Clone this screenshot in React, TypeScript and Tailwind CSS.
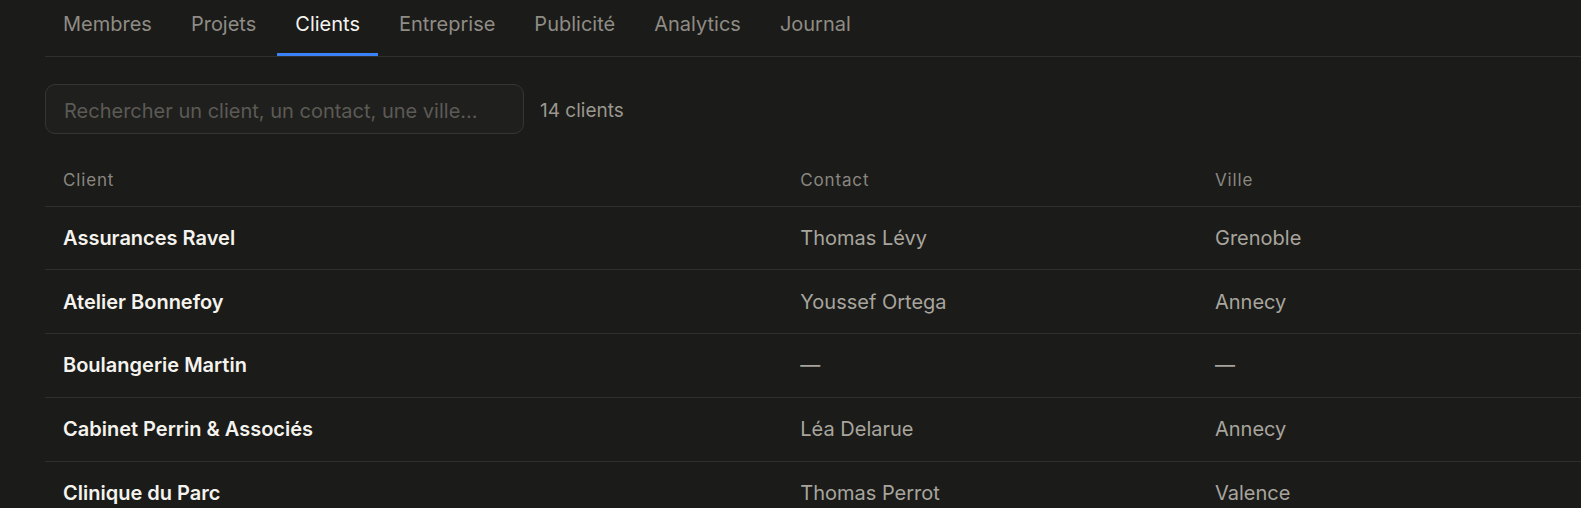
import { useState } from "react";

const tabs = ["Membres", "Projets", "Clients", "Entreprise", "Publicité", "Analytics", "Journal"];

type Client = {
  name: string;
  contact: string;
  city: string;
};

const clients: Client[] = [
  { name: "Assurances Ravel", contact: "Thomas Lévy", city: "Grenoble" },
  { name: "Atelier Bonnefoy", contact: "Youssef Ortega", city: "Annecy" },
  { name: "Boulangerie Martin", contact: "—", city: "—" },
  { name: "Cabinet Perrin & Associés", contact: "Léa Delarue", city: "Annecy" },
  { name: "Clinique du Parc", contact: "Thomas Perrot", city: "Valence" },
];

export default function App() {
  const [active, setActive] = useState("Clients");
  const [query, setQuery] = useState("");

  return (
    <div className="min-h-screen bg-[#1b1b19] pl-[45px] font-['Inter',sans-serif] text-[#f3f1ec]">

      <nav className="flex h-[57px] gap-[3px] border-b border-[#2f2f2c]">
        {tabs.map((tab) => (
          <button
            key={tab}
            type="button"
            onClick={() => setActive(tab)}
            className={
              tab === active
                ? "border-b-[3px] border-[#3b82f6] px-[18px] pb-[6px] text-[20px] text-[#f5f4f0]"
                : "border-b-[3px] border-transparent px-[18px] pb-[6px] text-[20px] text-[#8f8c85]"
            }
          >
            {tab}
          </button>
        ))}
      </nav>

      <div className="mt-[27px] flex items-center gap-4">
        <input
          value={query}
          onChange={(e) => setQuery(e.target.value)}
          placeholder="Rechercher un client, un contact, une ville…"
          className="h-[50px] w-[479px] rounded-[10px] border border-[#353532] bg-[#1f1f1d] px-[18px] pt-[3px] text-[20px] text-[#f3f1ec] outline-none placeholder:text-[#5c5a55]"
        />
        <span className="pt-[5px] text-[19px] text-[#9a978f]">14 clients</span>
      </div>

      <table className="mt-[18px] w-full table-fixed border-collapse text-left">
        <thead>
          <tr className="border-b border-[#2f2f2c]">
            <th className="h-[54px] w-[48%] px-[18px] pt-[3px] text-[17px] font-normal tracking-wider text-[#8a8780]">Client</th>
            <th className="w-[27%] px-[18px] pt-[3px] text-[17px] font-normal tracking-wider text-[#8a8780]">Contact</th>
            <th className="px-[18px] pt-[3px] text-[17px] font-normal tracking-wider text-[#8a8780]">Ville</th>
          </tr>
        </thead>
        <tbody>
          {clients.map((c) => (
            <tr key={c.name} className="border-b border-[#2f2f2c]">
              <td className="h-[63.8px] px-[18px] text-[20px] font-semibold text-[#f5f3ee]">{c.name}</td>
              <td className="px-[18px] text-[20px] text-[#a8a59e]">{c.contact}</td>
              <td className="px-[18px] text-[20px] text-[#a8a59e]">{c.city}</td>
            </tr>
          ))}
        </tbody>
      </table>

    </div>
  );
}
